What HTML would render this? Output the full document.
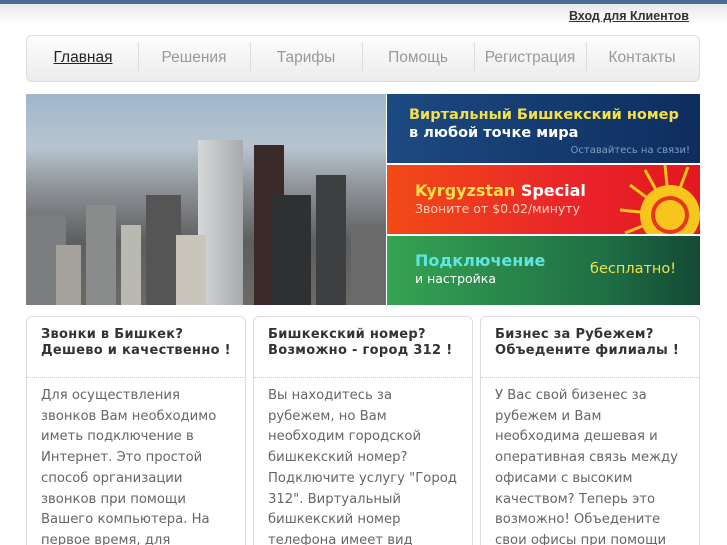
<!DOCTYPE html>
<html><head><meta charset="utf-8"><style>
*{margin:0;padding:0;box-sizing:border-box}
html,body{width:727px;height:545px;overflow:hidden}
body{background:#fff;font-family:"DejaVu Sans","Liberation Sans",sans-serif;position:relative}
.top{position:absolute;left:0;top:0;width:727px;height:4px;background:#4a6e93}
.topg{position:absolute;left:0;top:4px;width:727px;height:20px;background:linear-gradient(#e8e8e8,#fff)}
.login{position:absolute;right:38px;top:9px;font-size:12.5px;font-weight:bold;color:#333;text-decoration:underline;font-family:"Liberation Sans",sans-serif}
.nav{position:absolute;left:26px;top:35px;width:674px;height:47px;border:1px solid #ddd;border-radius:6px;background:linear-gradient(#fdfdfd,#ececec)}
.nav div{position:absolute;top:0;height:45px;width:112px;text-align:center;line-height:44px;font-family:"Liberation Sans",sans-serif;font-size:15.5px;color:#999}
.nav div.s{border-left:1px solid #ddd;top:6px;height:29px;width:0}
.nav .a{color:#222;text-decoration:underline}
.ban{position:absolute;left:26px;top:94px;width:674px;height:211px;background:#fff}
.photo{position:absolute;left:0;top:0;width:360px;height:211px;background:linear-gradient(#9fb7cc 0%,#b7c4cf 25%,#8e9196 45%,#5d5e60 70%,#6b6a66 100%);overflow:hidden}
.photo i{position:absolute;bottom:0;display:block}
.p{position:absolute;left:361px;width:313px;height:69px;font-weight:bold;overflow:hidden;white-space:nowrap}
.p div{position:absolute;white-space:nowrap}
.p1{top:0;background:linear-gradient(90deg,#1c4a82,#0e2d5e)}
.p2{top:71px;background:linear-gradient(90deg,#f24a17,#e9242a 60%,#e2181e)}
.p3{top:142px;background:linear-gradient(90deg,#35a453,#1f6e44 70%,#134a35)}
.card{position:absolute;top:316px;width:220px;height:229px;border:1px solid #ddd;border-bottom:none;border-radius:6px 6px 0 0;overflow:hidden}
.card h3{font-size:13px;line-height:16px;color:#333;padding:10px 14px 0;height:61px;border-bottom:1px dotted #ccc;letter-spacing:.3px;white-space:nowrap}
.card p{font-size:13.2px;line-height:20.7px;color:#666;padding:8px 12px 0 14px}
</style></head><body>
<div class="top"></div><div class="topg"></div>
<div class="login">Вход для Клиентов</div>
<div class="nav">
<div class="a" style="left:0">Главная</div><div class="s" style="left:111px"></div>
<div style="left:111px">Решения</div><div class="s" style="left:223px"></div>
<div style="left:223px">Тарифы</div><div class="s" style="left:335px"></div>
<div style="left:335px">Помощь</div><div class="s" style="left:447px"></div>
<div style="left:447px">Регистрация</div><div class="s" style="left:559px"></div>
<div style="left:559px">Контакты</div>
</div>
<div class="ban">
<div class="photo">
<i style="left:0;width:40px;height:90px;background:#7b7d7e"></i>
<i style="left:30px;width:25px;height:60px;background:#a5a29b"></i>
<i style="left:60px;width:30px;height:100px;background:#8a8c8c"></i>
<i style="left:95px;width:20px;height:80px;background:#b9b8b1"></i>
<i style="left:120px;width:35px;height:110px;background:#555"></i>
<i style="left:172px;width:45px;height:165px;background:linear-gradient(90deg,#d6d8d8,#a7abae)"></i>
<i style="left:228px;width:30px;height:160px;background:#3b2a2a"></i>
<i style="left:245px;width:40px;height:110px;background:#2f3031"></i>
<i style="left:290px;width:30px;height:130px;background:#3e3f40"></i>
<i style="left:325px;width:35px;height:80px;background:#6a6b6a"></i>
<i style="left:150px;width:30px;height:70px;background:#c9c5bb"></i>
</div>
<div class="p p1"><div style="left:22px;top:13px;color:#f4e04a;font-size:14.5px">Виртальный Бишкекский номер</div><div style="left:22px;top:31px;color:#fff;font-size:14.5px">в любой точке мира</div><div style="right:10px;top:51px;color:#7f9ec4;font-size:10px;font-weight:normal">Оставайтесь на связи!</div></div>
<div class="p p2"><svg style="position:absolute;right:0;top:0" width="100" height="69"><g stroke="#f7c51b" stroke-width="3"><line x1="70" y1="50" x2="30" y2="20"/><line x1="70" y1="50" x2="45" y2="5"/><line x1="70" y1="50" x2="65" y2="0"/><line x1="70" y1="50" x2="88" y2="2"/><line x1="70" y1="50" x2="20" y2="45"/><line x1="70" y1="50" x2="25" y2="68"/></g><circle cx="70" cy="50" r="30" fill="#f7c51b"/><circle cx="70" cy="50" r="19" fill="#e8361f"/><circle cx="70" cy="50" r="15" fill="#f7c51b"/></svg><div style="left:28px;top:16px;color:#f4e04a;font-size:16px">Kyrgyzstan <span style="color:#fff">Special</span></div><div style="left:28px;top:36px;color:#ffd1b8;font-size:12.5px;font-weight:normal">Звоните от $0.02/минуту</div></div>
<div class="p p3"><div style="left:28px;top:15px;color:#5fe6e0;font-size:16px">Подключение</div><div style="left:28px;top:35px;color:#fff;font-size:12.5px;font-weight:normal">и настройка</div><div style="left:203px;top:25px;color:#f4e04a;font-size:14.5px;font-weight:normal">бесплатно!</div></div>
</div>
<div class="card" style="left:26px"><h3>Звонки в Бишкек?<br>Дешево и качественно !</h3><p>Для осуществления звонков Вам необходимо иметь подключение в Интернет. Это простой способ организации звонков при помощи Вашего компьютера. На первое время, для тестирования, Вы можете скачать специальную</p></div>
<div class="card" style="left:253px"><h3>Бишкекский номер?<br>Возможно - город 312 !</h3><p>Вы находитесь за рубежем, но Вам необходим городской бишкекский номер? Подключите услугу "Город 312". Виртуальный бишкекский номер телефона имеет вид обычного городского номера вида (312)-XX XX XX. В</p></div>
<div class="card" style="left:480px"><h3>Бизнес за Рубежем?<br>Объедените филиалы !</h3><p>У Вас свой бизенес за рубежем и Вам необходима дешевая и оперативная связь между офисами с высоким качеством? Теперь это возможно! Объедените свои офисы при помощи услуги "Бизнес за Рубежем". Вы можете</p></div>
</body></html>
